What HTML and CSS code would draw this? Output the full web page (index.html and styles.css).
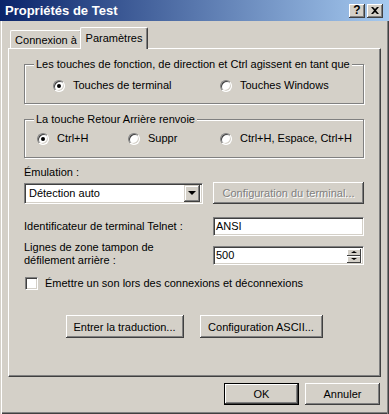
FILE: index.html
```html
<!DOCTYPE html>
<html lang="fr">
<head>
  <meta charset="UTF-8">
  <title>Propriétés de Test</title>
  <link rel="stylesheet" href="styles.css">
</head>
<body>
  <div class="window">
    <div class="titlebar">
      <span class="title">Propriétés de Test</span>
      <div class="caption-buttons">
        <span class="cap-btn help">?</span>
        <span class="cap-btn">
          <svg width="8" height="7" viewBox="0 0 8 7"><path d="M0 0h2l2 2 2-2h2L5 3.5 8 7H6L4 5 2 7H0l3-3.5z" fill="#000"/></svg>
        </span>
      </div>
    </div>

    <div class="dialog-body">
      <div class="tabs">
        <div class="tab">Connexion à</div>
        <div class="tab active">Paramètres</div>
      </div>

      <div class="panel">
        <fieldset class="group group-keys">
          <legend>Les touches de fonction, de direction et Ctrl agissent en tant que</legend>
          <div class="options">
            <label class="option wide"><span class="radio checked"></span>Touches de terminal</label>
            <label class="option"><span class="radio"></span>Touches Windows</label>
          </div>
        </fieldset>

        <fieldset class="group group-back">
          <legend>La touche Retour Arrière renvoie</legend>
          <div class="options">
            <label class="option col1"><span class="radio checked"></span>Ctrl+H</label>
            <label class="option col2"><span class="radio"></span>Suppr</label>
            <label class="option"><span class="radio"></span>Ctrl+H, Espace, Ctrl+H</label>
          </div>
        </fieldset>

        <div class="field-label">Émulation :</div>
        <div class="row row-emul">
          <div class="combo">
            <span class="combo-text">Détection auto</span>
            <span class="drop-btn"><span class="arrow-down"></span></span>
          </div>
          <button class="btn btn-wide disabled">Configuration du terminal...</button>
        </div>

        <div class="row row-telnet">
          <span>Identificateur de terminal Telnet :</span>
          <div class="textbox">ANSI</div>
        </div>

        <div class="row row-buffer">
          <span class="two-lines">Lignes de zone tampon de<br>défilement arrière :</span>
          <div class="textbox spin">
            <span>500</span>
            <span class="spin-btns">
              <span class="spin-btn"><span class="arrow-up small"></span></span>
              <span class="spin-btn"><span class="arrow-down small"></span></span>
            </span>
          </div>
        </div>

        <label class="check-row"><span class="checkbox"></span>Émettre un son lors des connexions et déconnexions</label>

        <div class="panel-buttons">
          <button class="btn btn-trad">Entrer la traduction...</button>
          <button class="btn btn-ascii">Configuration ASCII...</button>
        </div>
      </div>

      <div class="footer">
        <button class="btn btn-small default">OK</button>
        <button class="btn btn-small">Annuler</button>
      </div>
    </div>
  </div>
</body>
</html>
```

FILE: styles.css
```css
* {
  box-sizing: border-box;
}
body {
  margin: 0;
  background: #d4d0c8;
  font-family: "Liberation Sans", Arial, sans-serif;
  font-size: 11px;
  line-height: 13px;
  color: #000;
}
.window {
  width: 389px;
  height: 414px;
  display: flex;
  flex-direction: column;
}

/* title bar */
.titlebar {
  height: 21px;
  flex: none;
  display: flex;
  align-items: center;
  justify-content: space-between;
  padding: 0 6px 0 5px;
  background: linear-gradient(to right, #0a246a, #a6caf0);
  color: #fff;
  font-weight: bold;
  font-size: 13px;
}
.caption-buttons {
  display: flex;
  gap: 2px;
}
.cap-btn {
  width: 16px;
  height: 14px;
  display: flex;
  align-items: center;
  justify-content: center;
  background: #d4d0c8;
  color: #000;
  font-size: 12px;
  box-shadow: inset -1px -1px #404040, inset 1px 1px #fff, inset -2px -2px #808080;
}

/* body */
.dialog-body {
  flex: 1;
  padding: 6px 8px 0 8px;
  box-shadow: inset 1px 0 #d4d0c8, inset 2px 0 #fff, inset -1px 0 #404040, inset -2px 0 #808080, inset 0 -1px #404040, inset 0 -2px #808080;
}
.tabs {
  display: flex;
  align-items: flex-end;
  height: 21px;
  position: relative;
  z-index: 1;
}
.tab {
  height: 18px;
  width: 72px;
  margin-left: 2px;
  padding-top: 3px;
  text-align: center;
  border-top: 1px solid #fff;
  border-left: 1px solid #fff;
  border-right: 1px solid #404040;
  border-radius: 2px 2px 0 0;
  box-shadow: inset -1px 0 #808080;
}
.tab.active {
  height: 22px;
  width: 68px;
  margin-left: -2px;
  margin-bottom: -1px;
  padding-top: 4px;
  background: #d4d0c8;
}

.panel {
  height: 329px;
  padding: 0 16px 0 15px;
  border: 1px solid;
  border-color: #fff #404040 #404040 #fff;
  box-shadow: inset -1px -1px #808080;
}

/* group boxes */
.group {
  margin: 9px 0 0 0;
  padding: 8px 0 11px 0;
  min-width: 0;
  border: 1px solid #808080;
  box-shadow: 1px 1px 0 #fff, inset 1px 1px 0 #fff;
}
.group legend {
  margin-left: 9px;
  padding: 0 2px;
  background: #d4d0c8;
  line-height: 13px;
}
.group-back {
  padding: 6px 0 12px 0;
}
.options {
  display: flex;
  align-items: center;
  height: 13px;
}
.group-keys .options {
  padding-left: 28px;
}
.group-back .options {
  padding-left: 12px;
}
.option {
  display: flex;
  align-items: center;
}
.option.wide {
  width: 167px;
}
.option.col1 {
  width: 91px;
}
.option.col2 {
  width: 92px;
}
.radio {
  width: 12px;
  height: 12px;
  margin-right: 8px;
  border-radius: 50%;
  background: #fff;
  border: 1px solid;
  border-color: #808080 #fff #fff #808080;
  box-shadow: inset 1px 1px #404040, inset -1px -1px #d4d0c8;
  display: flex;
  align-items: center;
  justify-content: center;
}
.radio.checked::after {
  content: "";
  width: 4px;
  height: 4px;
  border-radius: 50%;
  background: #000;
}

/* fields */
.field-label {
  margin-top: 8px;
}
.row {
  display: flex;
  justify-content: space-between;
  align-items: center;
}
.row-emul {
  margin-top: 3px;
}
.combo {
  width: 179px;
  height: 21px;
  display: flex;
  align-items: center;
  justify-content: space-between;
  padding: 2px;
  background: #fff;
  border: 1px solid;
  border-color: #808080 #fff #fff #808080;
  box-shadow: inset 1px 1px #404040, inset -1px -1px #d4d0c8;
}
.combo-text {
  padding-left: 2px;
}
.drop-btn {
  width: 16px;
  height: 17px;
  display: flex;
  align-items: center;
  justify-content: center;
  background: #d4d0c8;
  box-shadow: inset -1px -1px #404040, inset 1px 1px #d4d0c8, inset -2px -2px #808080, inset 2px 2px #fff;
}
.arrow-down {
  width: 0;
  height: 0;
  border-left: 4px solid transparent;
  border-right: 4px solid transparent;
  border-top: 4px solid #000;
}
.arrow-up {
  width: 0;
  height: 0;
  border-left: 4px solid transparent;
  border-right: 4px solid transparent;
  border-bottom: 4px solid #000;
}
.arrow-down.small {
  border-width: 2px 3px 0 3px;
}
.arrow-up.small {
  border-width: 0 3px 2px 3px;
}

.btn {
  font-family: inherit;
  font-size: 11px;
  color: #000;
  background: #d4d0c8;
  border: none;
  padding: 0;
  box-shadow: inset -1px -1px #404040, inset 1px 1px #fff, inset -2px -2px #808080;
}
.btn-wide {
  width: 151px;
  height: 22px;
}
.btn.disabled {
  color: #808080;
  text-shadow: 1px 1px #fff;
}

.row-telnet {
  margin-top: 13px;
}
.textbox {
  width: 151px;
  height: 19px;
  display: flex;
  align-items: center;
  justify-content: space-between;
  padding: 0 2px;
  background: #fff;
  border: 1px solid;
  border-color: #808080 #fff #fff #808080;
  box-shadow: inset 1px 1px #404040, inset -1px -1px #d4d0c8;
}
.row-buffer {
  margin-top: 5px;
  align-items: flex-start;
}
.row-buffer .textbox {
  margin-top: 5px;
}
.spin-btns {
  display: flex;
  flex-direction: column;
}
.spin-btn {
  width: 14px;
  height: 7px;
  display: flex;
  align-items: center;
  justify-content: center;
  background: #d4d0c8;
  box-shadow: inset -1px -1px #404040, inset 1px 1px #fff;
}

.check-row {
  display: flex;
  align-items: center;
  margin-top: 10px;
  padding-left: 1px;
}
.checkbox {
  width: 13px;
  height: 13px;
  margin-right: 7px;
  background: #fff;
  border: 1px solid;
  border-color: #808080 #fff #fff #808080;
  box-shadow: inset 1px 1px #404040, inset -1px -1px #d4d0c8;
}

.panel-buttons {
  display: flex;
  justify-content: center;
  gap: 16px;
  margin-top: 25px;
}
.btn-trad {
  width: 118px;
  height: 23px;
}
.btn-ascii {
  width: 123px;
  height: 23px;
}

.footer {
  display: flex;
  justify-content: flex-end;
  gap: 6px;
  margin-top: 6px;
  padding-right: 1px;
}
.btn-small {
  width: 75px;
  height: 22px;
}
.btn.default {
  border: 1px solid #000;
}
```
